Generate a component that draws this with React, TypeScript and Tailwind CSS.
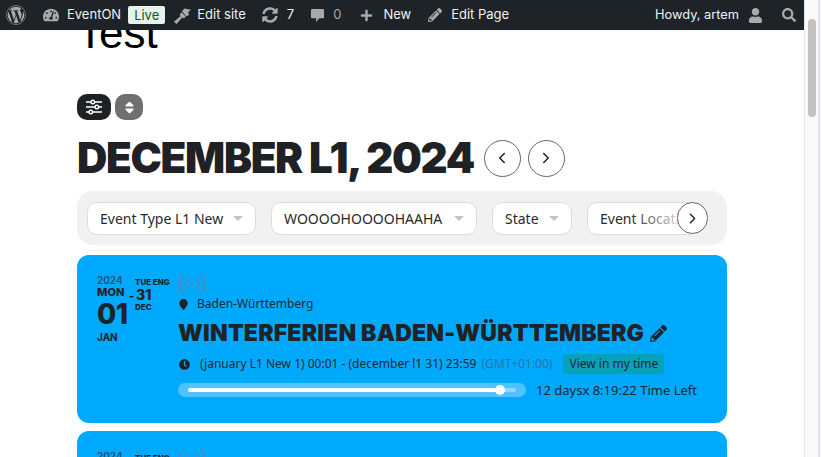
import { ChevronLeft, ChevronRight } from 'lucide-react'
import { FaClock, FaMapMarker, FaPencilAlt, FaPlus, FaSearch, FaSort, FaSyncAlt, FaTachometerAlt, FaUser, FaWordpress } from 'react-icons/fa'

function BroadcastIcon() {
  return (
    <svg viewBox="0 0 28 22" className="w-[28px] h-[22px] text-[#3f90c8]" fill="none" stroke="currentColor" strokeWidth="2.4" strokeLinecap="round">
      <circle cx="14" cy="11" r="2" fill="currentColor" stroke="none" />
      <path d="M9.5 6.5a7 7 0 0 0 0 9" />
      <path d="M18.5 6.5a7 7 0 0 1 0 9" />
      <path d="M4.5 2a14 14 0 0 0 0 18" />
      <path d="M23.5 2a14 14 0 0 1 0 18" />
    </svg>
  )
}

function BrushIcon() {
  return (
    <svg viewBox="0 0 20 20" className="ml-[8px] w-[19px] h-[19px] text-[#a7aaad]" fill="currentColor">
      <path d="M9 6.5 13.5 11l-2 2.2-1.8-1.2-6 7L1 16.5l7-6-1-1.6z" />
      <path d="M9.5 5.5 12 2.5l7 1.5-3 2.5 1 3-3.2 1.2z" />
    </svg>
  )
}

function CommentIcon() {
  return (
    <svg viewBox="0 0 16 16" className="ml-[16px] w-[15px] h-[15px] text-[#a7aaad]" fill="currentColor">
      <path d="M2.5 1h11A1.5 1.5 0 0 1 15 2.5v7a1.5 1.5 0 0 1-1.5 1.5H10l-3.5 4v-4h-4A1.5 1.5 0 0 1 1 9.5v-7A1.5 1.5 0 0 1 2.5 1z" />
    </svg>
  )
}

function SlidersIcon() {
  return (
    <svg viewBox="0 0 18 16" className="w-[18px] h-[16px] text-white" fill="none" stroke="currentColor" strokeWidth="1.4">
      <path d="M1 3h5M9.6 3H17M1 8h9M13.6 8H17M1 13h3M7.6 13H17" />
      <circle cx="7.8" cy="3" r="1.8" />
      <circle cx="11.8" cy="8" r="1.8" />
      <circle cx="5.8" cy="13" r="1.8" />
    </svg>
  )
}

function EventCard() {
  return (
    <div className="shrink-0 h-[168px] mb-2 rounded-xl bg-[#00a9fb] flex pl-5 pt-[18px] font-['Noto_Sans',sans-serif] text-[#1c2a35]">
      {/* Date */}
      <div className="w-[81px] shrink-0 flex font-['Inter',sans-serif]">
        <div className="w-[32px] shrink-0">
          <div className="text-[10px] leading-[13px] mt-[1px] font-semibold text-[#23506f]">2024</div>
          <div className="text-[11px] leading-[12px] -mt-[1px] font-extrabold text-[#1f2327]">MON</div>
          <div className="text-[28px] leading-[30px] mt-[1px] font-extrabold tracking-tight text-[#1f2327]">01</div>
          <div className="text-[10px] leading-[14px] mt-[1px] font-bold text-[#1f2327]">JAN</div>
        </div>
        <div className="text-[#1f2327] font-extrabold">
          <div className="text-[8px] leading-[10px] mt-[4px] ml-[6px] whitespace-nowrap">TUE ENG</div>
          <div className="flex items-center">
            <span className="text-[11px] leading-[14px] w-[7px] mt-[2px]">-</span>
            <span className="text-[14px] leading-[14px]">31</span>
          </div>
          <div className="text-[8px] leading-[10px] ml-[6px] -mt-[1px]">DEC</div>
        </div>
      </div>

      {/* Details */}
      <div className="flex-1">
        <BroadcastIcon />
        <div className="flex items-center text-[12px] leading-[16px] mt-[1px]">
          <FaMapMarker className="w-[9px] h-[11px] text-[#1f2327] mr-[9px] ml-[1px]" />
          Baden-Württemberg
        </div>
        <div className="flex items-center mt-[7px] h-[28px]">
          <h2 className="font-['Inter',sans-serif] font-black text-[23px] leading-[28px] tracking-[0.2px] text-[#1f2327] whitespace-nowrap">
            WINTERFERIEN BADEN-WÜRTTEMBERG
          </h2>
          <FaPencilAlt className="w-[17px] h-[17px] ml-[6px] text-[#1f2327]" />
        </div>
        <div className="flex items-center text-[12px] leading-[20px] mt-[7px] whitespace-nowrap">
          <FaClock className="w-[11px] h-[11px] mr-[10px] ml-[1px] text-[#1f2327]" />
          <span>(january L1 New 1) 00:01 - (december l1 31) 23:59</span>
          <span className="ml-[5px] text-[#2a75aa]">(GMT+01:00)</span>
          <span className="ml-[11px] px-[6px] rounded-[4px] bg-[#07a2b8]">View in my time</span>
        </div>
        <div className="flex items-center mt-[7px] h-[18px]">
          <div className="w-[348px] h-[14px] rounded-full bg-[#4fc3fd] pl-[10px] flex items-center">
            <div className="w-[313px] h-[4px] bg-white rounded-full relative">
              <span className="absolute right-[-4px] top-[-3px] w-[10px] h-[10px] rounded-full bg-white" />
            </div>
            <div className="w-[15px] h-[4px] rounded-r-full bg-[#8fd9ff]" />
          </div>
          <span className="ml-[10px] text-[13px] leading-[18px] whitespace-nowrap">12 daysx 8:19:22 Time Left</span>
        </div>
      </div>
    </div>
  )
}

function FilterPill({ label, className }: { label: string; className: string }) {
  return (
    <div className={`shrink-0 h-[33px] rounded-[10px] border border-[#dddddd] bg-white flex items-center pl-[12px] text-[14px] text-[#2a2a2a] whitespace-nowrap ${className}`}>
      {label}
      <span className="ml-auto mr-[12px] w-0 h-0 border-x-[5px] border-x-transparent border-t-[5px] border-t-[#c4c4c4]" />
    </div>
  )
}

export default function App() {
  return (
    <div className="w-[822px] h-[457px] overflow-hidden flex bg-white">
      <div className="w-[804px] shrink-0 flex flex-col">
        {/* Admin bar */}
        <header className="relative z-10 shrink-0 h-[30px] bg-[#1d2327] flex items-center text-[13px] text-[#f0f0f1] font-['Inter',sans-serif] whitespace-nowrap">
          <FaWordpress className="ml-[6px] w-[20px] h-[20px] text-[#a7aaad]" />
          <FaTachometerAlt className="ml-[17px] w-[16px] h-[16px] text-[#a7aaad]" />
          <span className="ml-[8px]">EventON</span>
          <span className="ml-[7px] h-[18px] px-[6px] rounded-[2px] bg-[#e5f4ea] text-[#14532d] leading-[18px]">Live</span>
          <BrushIcon />
          <span className="ml-[5px]">Edit site</span>
          <FaSyncAlt className="ml-[16px] w-[16px] h-[16px] text-[#a7aaad]" />
          <span className="ml-[9px]">7</span>
          <CommentIcon />
          <span className="ml-[8px] text-[#a7aaad]">0</span>
          <FaPlus className="ml-[19px] w-[13px] h-[13px] text-[#a7aaad]" />
          <span className="ml-[10px]">New</span>
          <FaPencilAlt className="ml-[17px] w-[14px] h-[14px] text-[#a7aaad]" />
          <span className="ml-[9px]">Edit Page</span>
          <span className="ml-auto text-[12.8px]">Howdy, artem</span>
          <FaUser className="ml-[9px] w-[15px] h-[15px] text-[#a7aaad]" />
          <FaSearch className="ml-[19px] mr-[8px] w-[14px] h-[14px] text-[#a7aaad]" />
        </header>

        <main className="flex-1 min-h-0 pl-[77px] pr-[77px] overflow-hidden">
          <h1 className="-mt-[24px] text-[44px] leading-[54px] text-black font-['Liberation_Sans',sans-serif]">Test</h1>

          <div className="flex gap-1 mt-[34px]">
            <button className="w-[34px] h-[26px] rounded-[10px] bg-[#202124] flex items-center justify-center">
              <SlidersIcon />
            </button>
            <button className="w-[28px] h-[26px] rounded-[10px] bg-[#6f6f6f] text-white flex items-center justify-center">
              <FaSort className="w-[15px] h-[15px]" />
            </button>
          </div>

          <div className="flex items-center mt-[10px] h-[56px]">
            <h2 className="font-['Inter',sans-serif] font-black text-[42px] leading-[56px] tracking-[-1.3px] text-[#202124] whitespace-nowrap">DECEMBER L1, 2024</h2>
            <button className="ml-[10px] w-[37px] h-[37px] rounded-full border border-[#666666] flex items-center justify-center text-[#202124]">
              <ChevronLeft className="w-[18px] h-[18px]" />
            </button>
            <button className="ml-[7px] w-[37px] h-[37px] rounded-full border border-[#666666] flex items-center justify-center text-[#202124]">
              <ChevronRight className="w-[18px] h-[18px]" />
            </button>
          </div>

          {/* Filters */}
          <div className="relative mt-[5px] h-[54px] rounded-2xl bg-[#f1f1f1] flex items-center gap-[15px] pl-[10px] font-['Noto_Sans',sans-serif]">
            <FilterPill label="Event Type L1 New" className="w-[169px]" />
            <FilterPill label="WOOOOHOOOOHAAHA" className="w-[206px]" />
            <FilterPill label="State" className="w-[80px]" />
            <div className="relative shrink-0 w-[105px] h-[33px] rounded-l-[10px] border border-[#dddddd] bg-white flex items-center pl-[12px] text-[14px] text-[#2a2a2a] whitespace-nowrap overflow-hidden">
              Event Location
              <div className="absolute right-0 top-0 w-[62px] h-full bg-gradient-to-r from-white/0 to-white" />
            </div>
            <div className="absolute right-[19px] top-[11px] w-[31px] h-[32px] rounded-full border border-[#666666] bg-white flex items-center justify-center text-[#202124]">
              <ChevronRight className="w-[17px] h-[17px]" />
            </div>
          </div>

          <div className="mt-[10px]">
            <EventCard />
            <EventCard />
          </div>
        </main>
      </div>

      {/* Scrollbar */}
      <div className="w-[14px] shrink-0 bg-[#fafafa] border-l border-[#e8e8e8] pl-[3px] pt-[19px]">
        <div className="w-[8px] h-[98px] rounded-full bg-[#c1c1c1]" />
      </div>
      <div className="w-[2px] shrink-0 bg-[#e2e0ea]" />
      <div className="w-[2px] shrink-0 bg-[#fafafa]" />
    </div>
  )
}
